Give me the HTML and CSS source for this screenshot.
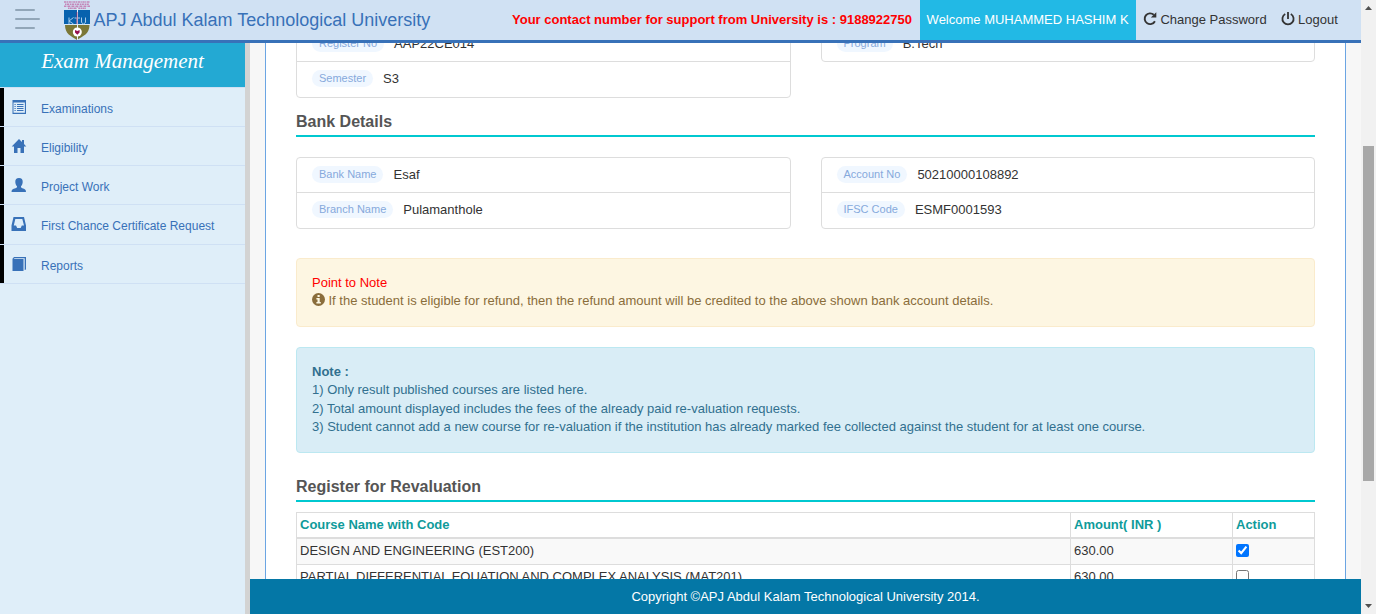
FILE: index.html
```html
<!DOCTYPE html>
<html lang="en">
<head>
<meta charset="utf-8">
<title>APJ Abdul Kalam Technological University</title>
<link rel="stylesheet" href="styles.css">
</head>
<body>
<div class="window">
  <div class="app">
    <header class="topbar">
      <div class="menu-toggle"><span></span><span class="long"></span><span></span></div>
      <svg class="logo" width="26" height="40" viewBox="0 0 26 40">
        <g fill="none" stroke="#c486b8" stroke-width="1.4">
          <path d="M0 2H26" stroke-dasharray="2.300 .5 1.200 .6"/><path d="M1 4.200H25" stroke-dasharray="1.500 .5 2.200 .7"/><path d="M0 6.300H26" stroke-dasharray="2 .6 1 .4"/><path d="M4 8.300H22" stroke-dasharray="1.300 .4 2.100 .5"/>
        </g>
        <path d="M0 10H26V25H0Z" fill="#0862ae"/>
        <path d="M1 25H25.500C25.500 34 19 36 13 40C7 36 1 34 1 25Z" fill="#7b7736"/>
        <path d="M0 24.500H26" stroke="#d5e6f5" stroke-width="1"/>
        <g fill="none" stroke="#a9cdea" stroke-width="1"><path d="M5 17.500V24M9.500 17.500L5 21L9.500 24M10.500 18H16M13 18V24M17.500 17.500V22.500Q19.500 25.500 21.500 22.500V17.500"/></g>
        <path d="M13.500 8V40" stroke="#e8eef5" stroke-width="1"/>
        <path d="M13 12V24" stroke="#9c2467" stroke-width=".7"/>
        <circle cx="13.300" cy="32" r="4.500" fill="#fff"/>
        <path d="M11 30L13.300 31L15.600 30V32.500L13.300 34.700L11 32.500Z" fill="#97104e"/>
      </svg>
      <div class="brand">APJ Abdul Kalam Technological University</div>
      <div class="support">Your contact number for support from University is : 9188922750</div>
      <div class="welcome">Welcome MUHAMMED HASHIM K</div>
      <a class="toplink change"><svg width="14" height="14" viewBox="0 0 14 14"><path d="M11.900 9.200A5.400 5.400 0 1 1 10.800 2.800" fill="none" stroke="#333" stroke-width="1.900"/><path d="M13.300 .2V5.600H7.900Z" fill="#333"/></svg>Change Password</a>
      <a class="toplink"><svg width="14" height="14" viewBox="0 0 14 14"><path d="M4.200 2A5.600 5.600 0 1 0 9.800 2" fill="none" stroke="#333" stroke-width="1.800"/><path d="M7 0V7" stroke="#333" stroke-width="1.800"/></svg>Logout</a>
    </header>
    <div class="body">
      <aside class="sidebar">
        <div class="side-title">Exam Management</div>
        <nav class="side-nav">
          <a><svg width="14" height="14" viewBox="0 0 14 14"><path fill="#3871b8" fill-rule="evenodd" d="M.5 0H14V14H.5ZM1.500 2.500V12.800H12.900V2.500Z"/><path stroke="#3871b8" d="M2.500 4.500H3.700M5 4.500H11.500M2.500 6.500H3.700M5 6.500H11.500M2.500 8.500H3.700M5 8.500H11.500M2.500 10.500H3.700M5 10.500H11.500"/></svg>Examinations</a>
          <a><svg width="14" height="14" viewBox="0 0 14 14"><path fill="#3871b8" d="M7 0L10 3V1H12V5L14.300 7.500H12V14H8.500V9H5.500V14H2V7.500H-.3Z"/></svg>Eligibility</a>
          <a><svg width="14" height="14" viewBox="0 0 14 14"><path fill="#3871b8" d="M7 0C9.600 0 10.800 1.500 10.700 4C10.600 6 10 7.300 9 8.200V9.200C9 10 13.200 10.700 13.700 12.200L14 14H-.5L-.2 12.200C.5 10.700 5 10 5 9.200V8.200C4 7.300 3.400 6 3.300 4C3.200 1.500 4.400 0 7 0Z"/></svg>Project Work</a>
          <a class="tall"><svg width="14" height="14" viewBox="0 0 14 14"><path fill="#3871b8" fill-rule="evenodd" d="M1.500 0H12L14 8.500V14H-.5V8.500ZM3.300 2L1.800 8.500H4L5.200 11H8.700L9.800 8.500H12L10.300 2Z"/></svg>First Chance Certificate Request</a>
          <a><svg width="14" height="14" viewBox="0 0 14 14"><path fill="#3871b8" d="M2 0H14V12.500L12.700 13V1.200H2.600L1.600 2.100H11.500V14H.5V1.700Z"/></svg>Reports</a>
        </nav>
      </aside>
      <div class="page">
        <main class="main">
          <div class="card">
            <div class="cols">
              <div class="list"><div class="row first"><span class="pill">Register No</span>AAP22CE014</div><div class="row"><span class="pill">Semester</span>S3</div></div>
              <div class="list"><div class="row first"><span class="pill">Program</span>B.Tech</div></div>
            </div>
            <h2 class="heading">Bank Details</h2>
            <div class="cols bank">
              <div class="list"><div class="row first"><span class="pill">Bank Name</span>Esaf</div><div class="row"><span class="pill">Branch Name</span>Pulamanthole</div></div>
              <div class="list"><div class="row first"><span class="pill">Account No</span>50210000108892</div><div class="row"><span class="pill">IFSC Code</span>ESMF0001593</div></div>
            </div>
            <div class="alert warning">
              <div class="point">Point to Note</div>
              <div><svg class="info-icon" width="13" height="13" viewBox="0 0 13 13"><circle cx="6.500" cy="6.500" r="6.500" fill="#8a6d3b"/><path fill="#fcf8e3" d="M5.500 2H7.700V4H5.500ZM4.400 5H7.700V9H8.800V10.500H4.400V9H5.500V6.500H4.400Z"/></svg>If the student is eligible for refund, then the refund amount will be credited to the above shown bank account details.</div>
            </div>
            <div class="alert info">
              <strong>Note :</strong><br>1) Only result published courses are listed here.<br>2) Total amount displayed includes the fees of the already paid re-valuation requests.<br>3) Student cannot add a new course for re-valuation if the institution has already marked fee collected against the student for at least one course.
            </div>
            <h2 class="heading revaluation">Register for Revaluation</h2>
            <div class="table">
              <div class="tr head"><div>Course Name with Code</div><div>Amount( INR )</div><div>Action</div></div>
              <div class="tr striped"><div>DESIGN AND ENGINEERING (EST200)</div><div>630.00</div><div><input type="checkbox" checked></div></div>
              <div class="tr"><div>PARTIAL DIFFERENTIAL EQUATION AND COMPLEX ANALYSIS (MAT201)</div><div>630.00</div><div><input type="checkbox"></div></div>
            </div>
          </div>
        </main>
        <footer class="footer">Copyright ©APJ Abdul Kalam Technological University 2014.</footer>
      </div>
    </div>
  </div>
  <div class="scrollbar">
    <svg width="15" height="15" viewBox="0 0 15 15"><path d="M4 10L7.500 6L11 10Z" fill="#505050"/></svg>
    <div class="thumb"></div>
    <svg class="down" width="15" height="15" viewBox="0 0 15 15"><path d="M4 5L7.500 9L11 5Z" fill="#505050"/></svg>
  </div>
</div>
</body>
</html>
```
FILE: styles.css
```css
* { box-sizing: border-box; }
body { margin: 0; font: 13px/18.57px "Liberation Sans", Arial, sans-serif; color: #333; }
.window { display: flex; width: 1376px; height: 614px; overflow: hidden; }
.app { width: 1361px; display: flex; flex-direction: column; }
.topbar { height: 43px; flex: none; display: flex; background: #d0e1f3; border-bottom: 3px solid #3871b8; line-height: 40px; white-space: nowrap; }
.menu-toggle { width: 64px; padding: 9px 0 0 15px; display: flex; flex-direction: column; gap: 7px; }
.menu-toggle span { width: 20px; height: 2px; background: #92a6b8; border-radius: 1px; }
.menu-toggle .long { width: 25px; }
.logo { flex: none; }
.brand { font-size: 18px; color: #3871b8; padding-left: 3.4px; }
.support { margin-left: auto; font-weight: bold; color: #f00; padding-right: 8px; }
.welcome { width: 216px; background: #22b9e5; color: #fff; padding-left: 6.6px; }
.toplink { display: flex; gap: 3px; width: 138px; padding-left: 7.4px; }
.toplink svg { margin-top: 12px; }
.toplink + .toplink { width: 87px; padding-left: 7px; }
.body { flex: 1; display: flex; min-height: 0; }
.sidebar { width: 250px; flex: none; background: #dfeef9; border-right: 5px solid #d3d3d3; }
.side-title { height: 44px; background: #23a9d3; color: #fff; font: italic 21px/36px "Liberation Serif", serif; text-align: center; }
.side-nav { border-top: 1px solid #d0e1f3; }
.side-nav a { height: 39px; display: flex; align-items: center; gap: 15.5px; padding: 5px 0 0 11.5px; font-size: 12px; color: #3871b8; border-bottom: 1px solid #cfe0f4; background: linear-gradient(#000, #000) 0 0 / 4px 100% no-repeat; background-origin: padding-box; background-clip: padding-box; }
.side-nav a svg { margin-top: -5px; overflow: visible; }
.side-nav .tall { height: 40px; padding-bottom: 1px; }
.page { flex: 1; min-width: 0; display: flex; flex-direction: column; }
.main { flex: 1; min-height: 0; overflow: hidden; padding: 0 15px; background: #f7f7f7; }
.card { height: 700px; margin-top: -17px; padding: 0 30px; background: #fff; border: solid #6ba5e3; border-width: 0 1px; }
.cols { display: grid; grid-template-columns: 494.5px 494.5px; gap: 30px; align-items: start; }
.list { border: 1px solid #ddd; border-radius: 4px; }
.row { height: 35px; padding: 0 15px 1px; display: flex; align-items: center; gap: 10px; }
.row.first { height: 34px; padding-bottom: 0; }
.row + .row { border-top: 1px solid #ddd; height: 36px; }
.pill { height: 17px; margin-bottom: 1px; padding: 0 7px; border-radius: 9px; background: #f0f7ff; color: #86a9dc; font-size: 11px; line-height: 17px; }
.heading { margin: 0 0 20px; height: 39px; padding-top: 15px; border-bottom: 2px solid #00c8d0; font-size: 16px; line-height: 18px; color: #555; }
.bank { margin-bottom: 29px; }
.alert { padding: 14.6px 15px 15px; border: 1px solid; border-radius: 4px; }
.warning { height: 69px; margin-bottom: 20px; color: #8a6d3b; background: #fdf6e2; border-color: #faebcc; }
.point { color: #f00; }
.info-icon { margin-right: 3.5px; vertical-align: -1px; }
.info { height: 106px; color: #31708f; background: #d9edf6; border-color: #bce8f1; white-space: nowrap; }
.revaluation { height: 49px; padding-top: 25px; margin-bottom: 10px; }
.table { border: 1px solid #ddd; }
.tr { display: grid; grid-template-columns: 774px 162px 1fr; height: 26px; border-bottom: 1px solid #ddd; }
.tr > div { padding: 3px; border-right: 1px solid #ddd; }
.tr > div:last-child { border-right: 0; }
.head { border-bottom-width: 2px; color: #0f9b9b; font-weight: bold; }
.striped { background: #f9f9f9; }
.tr input { display: block; width: 13px; height: 13px; margin: 2px 0 0; }
.footer { height: 35px; flex: none; background: #0477a6; color: #fff; text-align: center; line-height: 35px; }
.scrollbar { width: 15px; background: #f1f1f1; display: flex; flex-direction: column; }
.thumb { height: 335px; margin: 131px 2px 0; background: #a8a8a8; }
.down { margin-top: auto; }
```
